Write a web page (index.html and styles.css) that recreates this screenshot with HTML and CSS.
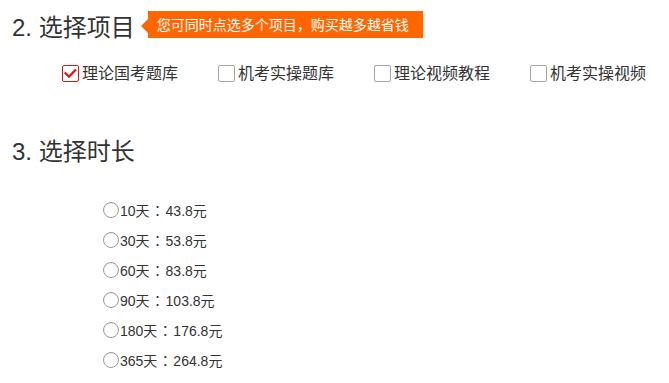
FILE: index.html
```html
<!DOCTYPE html>
<html lang="zh-CN">
<head>
<meta charset="utf-8">
<title>选择项目</title>
<link rel="stylesheet" href="styles.css">
</head>
<body>
<div class="page">
  <div class="step-head">
    <h2 class="step-title">2. 选择项目</h2>
    <div class="tip"><span class="tip-arrow"></span><span class="tip-text">您可同时点选多个项目<span class="punct">，</span>购买越多越省钱</span></div>
  </div>
  <div class="projects">
    <label class="check-item"><span class="box checked"><svg viewBox="0 0 17 17" width="17" height="17"><path d="M3.5 8.2 L7 11.6 L13.2 5.2" fill="none" stroke="#d9161a" stroke-width="2.2" stroke-linecap="square"/></svg></span><span class="check-text">理论国考题库</span></label>
    <label class="check-item"><span class="box"></span><span class="check-text">机考实操题库</span></label>
    <label class="check-item"><span class="box"></span><span class="check-text">理论视频教程</span></label>
    <label class="check-item"><span class="box"></span><span class="check-text">机考实操视频</span></label>
  </div>
  <h2 class="step-title step-three">3. 选择时长</h2>
  <ul class="durations">
    <li class="radio-item"><span class="radio"></span>10天<span class="punct">：</span>43.8元</li>
    <li class="radio-item"><span class="radio"></span>30天<span class="punct">：</span>53.8元</li>
    <li class="radio-item"><span class="radio"></span>60天<span class="punct">：</span>83.8元</li>
    <li class="radio-item"><span class="radio"></span>90天<span class="punct">：</span>103.8元</li>
    <li class="radio-item"><span class="radio"></span>180天<span class="punct">：</span>176.8元</li>
    <li class="radio-item"><span class="radio"></span>365天<span class="punct">：</span>264.8元</li>
  </ul>
</div>
</body>
</html>
```
FILE: styles.css
```css
html, body {
  margin: 0;
  padding: 0;
  background: #ffffff;
}
body {
  font-family: "Liberation Sans", "Noto Sans CJK SC", sans-serif;
  color: #333333;
  overflow: hidden;
}
.punct {
  font-family: "Noto Sans CJK TC", sans-serif;
}
.page {
  padding-top: 14px;
}
.step-head {
  display: flex;
  align-items: flex-start;
  padding-left: 12px;
}
.step-title {
  margin: 0;
  font-size: 24px;
  line-height: 27px;
  font-weight: normal;
  color: #333333;
}
.tip {
  display: flex;
  align-items: center;
  margin-left: 6px;
  margin-top: -3px;
}
.tip-arrow {
  width: 0;
  height: 0;
  border-top: 7px solid transparent;
  border-bottom: 7px solid transparent;
  border-right: 7px solid #ff6600;
  margin-top: 3px;
}
.tip-text {
  display: block;
  width: 266px;
  height: 27px;
  line-height: 27px;
  padding-left: 9px;
  background: #ff6600;
  color: #ffffff;
  font-size: 14px;
  white-space: nowrap;
}
.projects {
  display: flex;
  gap: 40px;
  margin-top: 24px;
  padding-left: 62px;
  height: 17px;
  align-items: center;
}
.check-item {
  display: flex;
  align-items: center;
  gap: 3px;
  font-size: 16px;
  line-height: 17px;
  white-space: nowrap;
  flex: none;
}
.box {
  box-sizing: border-box;
  width: 17px;
  height: 17px;
  border: 1px solid #a6a6a6;
  border-radius: 2px;
  background: #ffffff;
  position: relative;
  flex: none;
}
.box.checked {
  border-color: #d9161a;
}
.box svg {
  position: absolute;
  left: -1px;
  top: -1px;
}
.step-three {
  margin-top: 56px;
  padding-left: 12px;
}
.durations {
  list-style: none;
  margin: 30px 0 0 0;
  padding: 0 0 0 103px;
}
.radio-item {
  display: flex;
  align-items: center;
  height: 30px;
  gap: 1px;
  font-size: 14px;
  color: #333333;
  white-space: nowrap;
}
.radio {
  box-sizing: border-box;
  width: 16px;
  height: 16px;
  border: 1.5px solid #9a9a9a;
  border-radius: 50%;
  background: #ffffff;
  box-shadow: inset 0 1px 2px rgba(0,0,0,0.08);
  flex: none;
}
```
